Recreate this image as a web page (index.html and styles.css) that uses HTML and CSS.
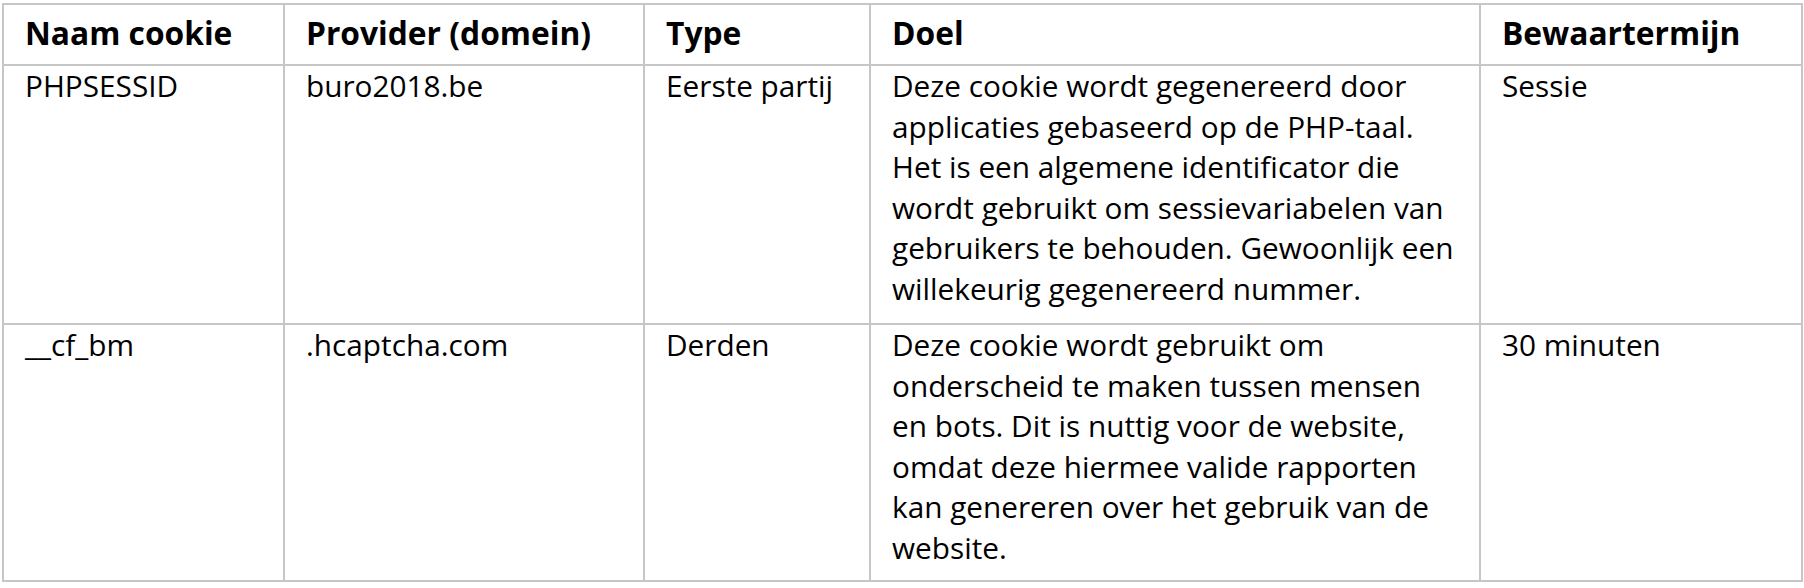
FILE: index.html
```html
<!DOCTYPE html>
<html lang="nl">
<head>
<meta charset="utf-8">
<title>Cookies</title>
<link rel="stylesheet" href="styles.css">
</head>
<body>
<table class="cookie-table">
  <colgroup>
    <col class="c-name">
    <col class="c-provider">
    <col class="c-type">
    <col class="c-goal">
    <col class="c-term">
  </colgroup>
  <thead>
    <tr>
      <th>Naam cookie</th>
      <th>Provider (domein)</th>
      <th>Type</th>
      <th>Doel</th>
      <th>Bewaartermijn</th>
    </tr>
  </thead>
  <tbody>
    <tr>
      <td>PHPSESSID</td>
      <td>buro2018.be</td>
      <td>Eerste partij</td>
      <td>Deze cookie wordt gegenereerd door applicaties gebaseerd op de PHP-taal. Het is een algemene identificator die wordt gebruikt om sessievariabelen van gebruikers te behouden. Gewoonlijk een willekeurig gegenereerd nummer.</td>
      <td>Sessie</td>
    </tr>
    <tr>
      <td>__cf_bm</td>
      <td>.hcaptcha.com</td>
      <td>Derden</td>
      <td>Deze cookie wordt gebruikt om onderscheid te maken tussen mensen en bots. Dit is nuttig voor de website, omdat deze hiermee valide rapporten kan genereren over het gebruik van de website.</td>
      <td>30 minuten</td>
    </tr>
  </tbody>
</table>
</body>
</html>
```
FILE: styles.css
```css
html, body {
  margin: 0;
  padding: 0;
  background: #ffffff;
}

body {
  padding: 3px 0 0 2px;
  font-family: "Open Sans", "Noto Sans", sans-serif;
  font-size: 29.75px;
  line-height: 40.5px;
  color: #000000;
}

.cookie-table {
  table-layout: fixed;
  width: 1801px;
  border-collapse: separate;
  border-spacing: 2px;
  background: #c6c6c6;
}

.c-name { width: 279px; }
.c-provider { width: 358px; }
.c-type { width: 224px; }
.c-goal { width: 608px; }
.c-term { width: 320px; }

.cookie-table th,
.cookie-table td {
  background: #ffffff;
  text-align: left;
  vertical-align: top;
  padding: 0 21px 14px 21px;
}

.cookie-table tbody tr:last-child td {
  padding-bottom: 12px;
}

.cookie-table th {
  font-size: 31.75px;
  font-weight: 700;
  line-height: 43px;
  padding: 6px 21px 10px 21px;
}
```
